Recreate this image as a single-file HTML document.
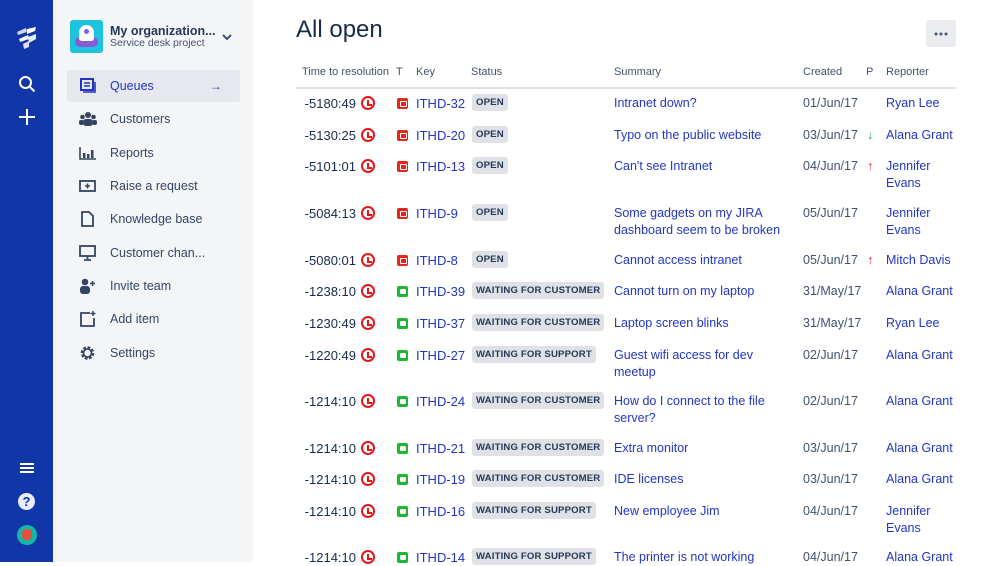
<!DOCTYPE html><html><head><meta charset="utf-8"><style>
*{margin:0;padding:0;box-sizing:border-box}
body{width:999px;height:562px;overflow:hidden;font-family:"Liberation Sans",sans-serif;background:#fff;position:relative;color:#172b4d}
.nav{position:absolute;left:0;top:0;width:53px;height:562px;background:#1136a8}
.side{position:absolute;left:53px;top:0;width:200px;height:562px;background:#f4f5f7}
.item{position:absolute;left:14px;width:173px;height:32px;font-size:12.5px;color:#344563;line-height:32px;padding-left:43px}
.item svg{position:absolute;left:12px;top:8px}
.a{color:#2236c4}
.r{position:absolute;left:0;width:999px;font-size:12.5px;line-height:17px}
.r>*{position:absolute;top:0}
.t{left:290px;width:66px;text-align:right;color:#172b4d;font-size:13px}
.clk{left:361px;top:1px!important;width:14px;height:14px;border:2px solid #e5171b;border-radius:50%}
.clk:after{content:"";position:absolute;left:3.5px;top:1.5px;width:3px;height:4px;border-left:2px solid #e5171b;border-bottom:2px solid #e5171b}
.ty{left:397px;top:3px!important;width:11px;height:11px;border-radius:2px}
.bug{background:#e5271b}.bug:after{content:"";position:absolute;left:3px;top:3px;width:5px;height:4px;border:1px solid #fff;border-radius:1px}
.sr{background:#1fb535}.sr:after{content:"";position:absolute;left:2.5px;top:3px;width:6px;height:4.5px;background:#fff;border-radius:1.5px}
.k{left:416px;color:#2236c4;font-size:13px}
.st{left:472px;top:-1px!important;background:#dfe1e6;border-radius:3px;font-size:9.6px;font-weight:bold;color:#253858;padding:1px 4px;letter-spacing:.15px;line-height:15px;white-space:nowrap}
.s{left:614px;width:180px;color:#2236c4}
.c{left:803px;color:#42526e}
.p{left:867px;font-weight:bold}
.rep{left:886px;width:75px;color:#2236c4}
.h{position:absolute;top:66px;font-size:11px;color:#42526e}
</style></head><body>
<div class="nav">
<svg style="position:absolute;left:14px;top:26px" width="26" height="24" viewBox="0 0 26 24"><g fill="#fff"><path d="M3 6l9-4 1 4-9 3z" opacity=".8"/><path d="M5 13l9-4 1 4-9 3z"/><path d="M13 3l9-2-1 4-8 3z"/><path d="M14 11l8-3 0 5-7 4z" opacity=".9"/><path d="M9 18l6-3 0 6-5 2z" opacity=".85"/></g></svg>
<svg style="position:absolute;left:18px;top:75px" width="18" height="18" viewBox="0 0 18 18"><circle cx="7.5" cy="7.5" r="5.5" fill="none" stroke="#fff" stroke-width="2"/><path d="M11.5 11.5l5 5" stroke="#fff" stroke-width="2"/></svg>
<svg style="position:absolute;left:18px;top:108px" width="18" height="18"><path d="M9 1v16M1 9h16" stroke="#fff" stroke-width="2"/></svg>
<svg style="position:absolute;left:20px;top:462px" width="14" height="12"><path d="M0 2h14M0 6h14M0 10h14" stroke="#fff" stroke-width="2"/></svg>
<div style="position:absolute;left:18px;top:493px;width:17px;height:17px;border-radius:50%;background:#e8eefc;color:#1136a8;font-weight:bold;font-size:13px;text-align:center;line-height:17px">?</div>
<div style="position:absolute;left:17px;top:525px;width:20px;height:20px;border-radius:50%;background:#13b7a6"><div style="position:absolute;left:5px;top:4px;width:10px;height:11px;border-radius:4px;background:#e2503f"></div></div>
</div>
<div class="side">
<div style="position:absolute;left:17px;top:20px;width:33px;height:33px;background:#1ec4df;border-radius:3px;overflow:hidden"><div style="position:absolute;left:5px;top:17px;width:23px;height:10px;background:#8a5bd6;border-radius:6px"></div><div style="position:absolute;left:9px;top:5px;width:15px;height:16px;background:#fff;border-radius:8px 8px 3px 3px"></div><div style="position:absolute;left:14px;top:9px;width:5px;height:5px;background:#8a5bd6;border-radius:50%"></div></div>
<div style="position:absolute;left:57px;top:24px;font-size:12.5px;line-height:15px;font-weight:bold;color:#253858;white-space:nowrap">My organization...</div>
<div style="position:absolute;left:57px;top:37px;font-size:10.5px;line-height:13px;color:#42526e;white-space:nowrap">Service desk project</div>
<svg style="position:absolute;left:169px;top:34px" width="10" height="7"><path d="M1 1l4 4 4-4" fill="none" stroke="#42526e" stroke-width="2"/></svg>
<div class="item a" style="top:70px;background:#e6e8ed;border-radius:3px">Queues<span style="position:absolute;right:18px;font-size:12px">→</span>
<svg width="18" height="16"><rect x="2" y="1" width="12" height="11" fill="none" stroke="#2236c4" stroke-width="2"/><path d="M5 5h6M5 8h6M16 4v10H4" fill="none" stroke="#2236c4" stroke-width="1.6"/></svg></div>
<div class="item" style="top:103px"><svg width="18" height="16"><circle cx="9" cy="4" r="3" fill="#344563"/><circle cx="3.5" cy="6" r="2.3" fill="#344563"/><circle cx="14.5" cy="6" r="2.3" fill="#344563"/><rect x="4" y="8" width="10" height="7" rx="3" fill="#344563"/><rect x="0" y="9" width="5" height="5" rx="2" fill="#344563"/><rect x="13" y="9" width="5" height="5" rx="2" fill="#344563"/></svg>Customers</div>
<div class="item" style="top:137px"><svg width="18" height="16"><path d="M1 2v12h16" fill="none" stroke="#344563" stroke-width="1.6"/><rect x="4" y="8" width="2.5" height="5" fill="#344563"/><rect x="8" y="9" width="2.5" height="4" fill="#344563"/><rect x="12" y="5" width="2.5" height="8" fill="#344563"/></svg>Reports</div>
<div class="item" style="top:170px"><svg width="18" height="16"><rect x="1" y="3" width="15" height="10" fill="none" stroke="#344563" stroke-width="1.8"/><path d="M8.5 5.5v5M6 8h5" stroke="#344563" stroke-width="1.6"/></svg>Raise a request</div>
<div class="item" style="top:203px"><svg width="18" height="16"><path d="M3 1h7l4 4v10H3z" fill="none" stroke="#344563" stroke-width="1.8"/></svg>Knowledge base</div>
<div class="item" style="top:237px"><svg width="18" height="16"><rect x="1" y="1" width="15" height="10" fill="none" stroke="#344563" stroke-width="1.8"/><path d="M8.5 11v3M5 15h7" stroke="#344563" stroke-width="1.8"/></svg>Customer chan...</div>
<div class="item" style="top:270px"><svg width="18" height="16"><circle cx="6" cy="4" r="3.3" fill="#344563"/><rect x="1" y="8" width="10" height="8" rx="3" fill="#344563"/><path d="M13.5 3v5M11 5.5h5" stroke="#344563" stroke-width="1.5"/></svg>Invite team</div>
<div class="item" style="top:303px"><svg width="18" height="16"><path d="M11 2H2v13h13V7" fill="none" stroke="#344563" stroke-width="1.8"/><path d="M14 0v5M11.5 2.5h5" stroke="#344563" stroke-width="1.5"/></svg>Add item</div>
<div class="item" style="top:337px"><svg width="18" height="16"><circle cx="8.5" cy="8" r="5" fill="none" stroke="#344563" stroke-width="3.5" stroke-dasharray="2.5 1.4"/><circle cx="8.5" cy="8" r="4" fill="none" stroke="#344563" stroke-width="1.6"/></svg>Settings</div>
</div>
<div style="position:absolute;left:296px;top:16px;font-size:24px;color:#172b4d">All open</div>
<div style="position:absolute;left:926px;top:20px;width:30px;height:27px;background:#ebecf0;border-radius:3px"><svg style="position:absolute;left:8px;top:12px" width="14" height="4"><circle cx="2" cy="2" r="1.5" fill="#42526e"/><circle cx="7" cy="2" r="1.5" fill="#42526e"/><circle cx="12" cy="2" r="1.5" fill="#42526e"/></svg></div>
<div class="h" style="left:302px">Time to resolution</div><div class="h" style="left:396px">T</div><div class="h" style="left:416px">Key</div><div class="h" style="left:471px">Status</div><div class="h" style="left:614px">Summary</div><div class="h" style="left:803px">Created</div><div class="h" style="left:866px">P</div><div class="h" style="left:886px">Reporter</div>
<div style="position:absolute;left:296px;top:87px;width:660px;height:2px;background:#dfe1e6"></div>

<div class="r" style="top:95px"><span class="t">-5180:49</span><span class="clk"></span><span class="ty bug"></span><span class="k">ITHD-32</span><span class="st">OPEN</span><span class="s">Intranet down?</span><span class="c">01/Jun/17</span><span class="rep">Ryan Lee</span></div>
<div class="r" style="top:127px"><span class="t">-5130:25</span><span class="clk"></span><span class="ty bug"></span><span class="k">ITHD-20</span><span class="st">OPEN</span><span class="s" style="width:200px">Typo on the public website</span><span class="c">03/Jun/17</span><span class="p" style="color:#1fa84a">↓</span><span class="rep">Alana Grant</span></div>
<div class="r" style="top:158px"><span class="t">-5101:01</span><span class="clk"></span><span class="ty bug"></span><span class="k">ITHD-13</span><span class="st">OPEN</span><span class="s">Can't see Intranet</span><span class="c">04/Jun/17</span><span class="p" style="color:#e5171b">↑</span><span class="rep">Jennifer Evans</span></div>
<div class="r" style="top:205px"><span class="t">-5084:13</span><span class="clk"></span><span class="ty bug"></span><span class="k">ITHD-9</span><span class="st">OPEN</span><span class="s">Some gadgets on my JIRA dashboard seem to be broken</span><span class="c">05/Jun/17</span><span class="rep">Jennifer Evans</span></div>
<div class="r" style="top:252px"><span class="t">-5080:01</span><span class="clk"></span><span class="ty bug"></span><span class="k">ITHD-8</span><span class="st">OPEN</span><span class="s">Cannot access intranet</span><span class="c">05/Jun/17</span><span class="p" style="color:#e5171b">↑</span><span class="rep">Mitch Davis</span></div>
<div class="r" style="top:283px"><span class="t">-1238:10</span><span class="clk"></span><span class="ty sr"></span><span class="k">ITHD-39</span><span class="st">WAITING FOR CUSTOMER</span><span class="s">Cannot turn on my laptop</span><span class="c">31/May/17</span><span class="rep">Alana Grant</span></div>
<div class="r" style="top:315px"><span class="t">-1230:49</span><span class="clk"></span><span class="ty sr"></span><span class="k">ITHD-37</span><span class="st">WAITING FOR CUSTOMER</span><span class="s">Laptop screen blinks</span><span class="c">31/May/17</span><span class="rep">Ryan Lee</span></div>
<div class="r" style="top:347px"><span class="t">-1220:49</span><span class="clk"></span><span class="ty sr"></span><span class="k">ITHD-27</span><span class="st">WAITING FOR SUPPORT</span><span class="s">Guest wifi access for dev meetup</span><span class="c">02/Jun/17</span><span class="rep">Alana Grant</span></div>
<div class="r" style="top:393px"><span class="t">-1214:10</span><span class="clk"></span><span class="ty sr"></span><span class="k">ITHD-24</span><span class="st">WAITING FOR CUSTOMER</span><span class="s">How do I connect to the file server?</span><span class="c">02/Jun/17</span><span class="rep">Alana Grant</span></div>
<div class="r" style="top:440px"><span class="t">-1214:10</span><span class="clk"></span><span class="ty sr"></span><span class="k">ITHD-21</span><span class="st">WAITING FOR CUSTOMER</span><span class="s">Extra monitor</span><span class="c">03/Jun/17</span><span class="rep">Alana Grant</span></div>
<div class="r" style="top:471px"><span class="t">-1214:10</span><span class="clk"></span><span class="ty sr"></span><span class="k">ITHD-19</span><span class="st">WAITING FOR CUSTOMER</span><span class="s">IDE licenses</span><span class="c">03/Jun/17</span><span class="rep">Alana Grant</span></div>
<div class="r" style="top:503px"><span class="t">-1214:10</span><span class="clk"></span><span class="ty sr"></span><span class="k">ITHD-16</span><span class="st">WAITING FOR SUPPORT</span><span class="s">New employee Jim</span><span class="c">04/Jun/17</span><span class="rep">Jennifer Evans</span></div>
<div class="r" style="top:549px"><span class="t">-1214:10</span><span class="clk"></span><span class="ty sr"></span><span class="k">ITHD-14</span><span class="st">WAITING FOR SUPPORT</span><span class="s">The printer is not working</span><span class="c">04/Jun/17</span><span class="rep">Alana Grant</span></div>
</body></html>
